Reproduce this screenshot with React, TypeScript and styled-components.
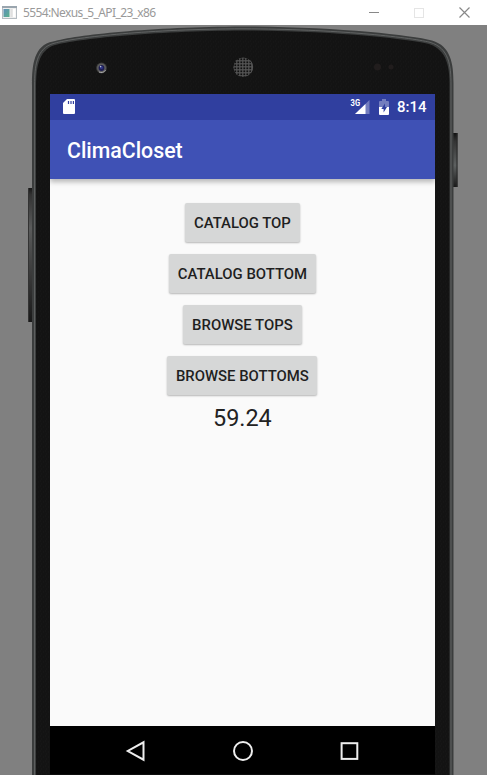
import React from "react";
import styled, { createGlobalStyle } from "styled-components";

const GlobalStyle = createGlobalStyle`
  * { box-sizing: border-box; }
  html, body { margin: 0; padding: 0; overflow: hidden; background: #808080; }
`;

const EmulatorWindow = styled.div`
  width: 487px;
  height: 775px;
  display: flex;
  flex-direction: column;
  overflow: hidden;
  background: #808080;
  font-family: Roboto, sans-serif;
`;

const TitleBar = styled.header`
  height: 25px;
  flex: none;
  display: flex;
  align-items: center;
  justify-content: space-between;
  background: #fff;
  padding: 0 17.5px 0 2px;
`;

const WindowTitle = styled.div`
  display: flex;
  align-items: center;
  gap: 6px;
  font-family: "Noto Sans", "Open Sans", sans-serif;
  font-size: 12px;
  letter-spacing: -0.62px;
  color: #999;
  white-space: nowrap;
`;

const WindowControls = styled.div`
  display: flex;
  gap: 35px;
  align-items: center;
`;

const Drawing = styled.svg`
  display: block;
  flex: none;
`;

const Stage = styled.main`
  position: relative;
  flex: 1;
  display: flex;
  padding: 69px 52px 0 50px;
`;

const PhoneBody = styled.svg`
  position: absolute;
  inset: 0;
`;

const Screen = styled.section`
  position: relative;
  flex: 1;
  display: flex;
  flex-direction: column;
  background: #fafafa;
`;

const StatusBar = styled.div`
  height: 26px;
  flex: none;
  display: flex;
  align-items: center;
  padding: 0 8.5px 0 13px;
  background: #303f9f;
  color: #fff;
`;

const CardIcon = styled(Drawing)`
  margin-bottom: 1px;
`;

const StatusIcons = styled.div`
  margin-left: auto;
  display: flex;
  align-items: center;
  gap: 9px;
`;

const Clock = styled.span`
  margin-left: -1.4px;
  font-size: 15px;
  font-weight: 500;
  line-height: 26px;
`;

const AppBar = styled.div`
  height: 59px;
  flex: none;
  display: flex;
  align-items: center;
  padding: 2px 17px 0;
  background: #3f51b5;
  color: #fff;
  font-size: 21.3px;
  font-weight: 500;
  box-shadow: 0 3px 5px rgba(0, 0, 0, 0.27);
  clip-path: inset(0 0 -12px 0);
`;

const Content = styled.div`
  flex: 1;
  display: flex;
  flex-direction: column;
  align-items: center;
  gap: 12.2px;
  padding: 23.6px 0.2px 0 0;
`;

const MaterialButton = styled.button<{ $width: number }>`
  width: ${(p) => p.$width}px;
  height: 39px;
  flex: none;
  padding: 1px 0 0;
  border: 0;
  border-radius: 2px;
  background: #d6d7d7;
  color: #1f1f1f;
  font: 500 14.9px Roboto, sans-serif;
  white-space: nowrap;
  box-shadow: 0 1px 2px rgba(0, 0, 0, 0.28);
`;

const Reading = styled.output`
  margin-top: -5.4px;
  font-size: 23.4px;
  line-height: 32px;
  color: #222;
`;

const NavBar = styled.nav`
  height: 49px;
  flex: none;
  display: flex;
  align-items: center;
  justify-content: center;
  gap: 83px;
  padding-top: 2px;
  background: #000;
  border-bottom: 1px solid #0e0e0e;
`;

const outline =
  "M32 751 V60 C32 40 34 20 53 16.5 C76 10 150 1.8 243 1.5 C336 1.8 410 10 432 15.5 C451 21 453.5 39 453.5 58 V751 Z";
const bezel =
  "M36 751 V62 C36 44 38 25 55 20 C78 14 150 6 243 5.5 C336 6 408 14 429 19 C447 25 449.5 42 449.5 60 V751 Z";

function Phone() {
  return (
    <PhoneBody width="487" height="750" viewBox="0 0 487 750" aria-hidden>
      <defs>
        <linearGradient id="volume" x1="0" x2="0" y1="0" y2="1">
          <stop offset="0" stopColor="#181818" />
          <stop offset="0.05" stopColor="#333" />
          <stop offset="0.3" stopColor="#5a5b5b" />
          <stop offset="0.7" stopColor="#353535" />
          <stop offset="1" stopColor="#191919" />
        </linearGradient>
        <linearGradient id="power" x1="0" x2="0" y1="0" y2="1">
          <stop offset="0" stopColor="#111" />
          <stop offset="0.15" stopColor="#333" />
          <stop offset="0.6" stopColor="#5d6060" />
          <stop offset="1" stopColor="#191919" />
        </linearGradient>
        <pattern id="grain" width="5" height="5" patternUnits="userSpaceOnUse">
          <rect width="5" height="5" fill="#131313" />
          <path d="M0 1h1M3 2h1M1 4h1" stroke="#181818" />
        </pattern>
        <pattern id="mesh" width="3" height="3" patternUnits="userSpaceOnUse">
          <rect width="3" height="3" fill="#555" />
          <rect x="0.4" y="0.4" width="1.8" height="1.8" fill="#111" />
        </pattern>
      </defs>
      <rect x="28" y="163" width="5" height="134" fill="url(#volume)" />
      <path d="M28.5 163v134" stroke="#333" />
      <rect x="453" y="108" width="4.5" height="54" fill="url(#power)" />
      <path d="M457 108v54" stroke="#292929" />
      <path d={outline} fill="#3b3d3d" />
      <path d={bezel} fill="url(#grain)" />
      <path
        d="M34.6 751 V60 C34.6 42 36 23 54 18.3 C77 12 150 4 243 3.8 C336 4 408 12 430 17.3 C449 23 451 40 451 60 V751"
        fill="none"
        stroke="#646666"
        strokeWidth="0.9"
      />
      <circle cx="101.5" cy="43" r="5.4" fill="#3c3c3c" />
      <circle cx="101.5" cy="43" r="4.5" fill="#5c5c5c" />
      <path d="M99 47a4.8 4.8 0 0 0 6.6-2" fill="none" stroke="#a5a5a5" />
      <circle cx="101.5" cy="43" r="2.9" fill="#1d1d52" />
      <circle cx="101.5" cy="42.7" r="1.4" fill="#30378c" />
      <circle cx="100.6" cy="41.6" r="0.8" fill="#b7bed6" />
      <circle cx="243.2" cy="42.3" r="9.8" fill="url(#mesh)" />
      <path d="M250.5 36a9.5 9.5 0 0 1 0 12" fill="none" stroke="#555" />
      <circle cx="377.5" cy="42" r="3.5" fill="#211d1d" />
      <circle cx="391" cy="42" r="2.5" fill="#211d1d" />
    </PhoneBody>
  );
}

const ACTIONS = [
  { label: "CATALOG TOP", width: 115 },
  { label: "CATALOG BOTTOM", width: 147 },
  { label: "BROWSE TOPS", width: 118.6 },
  { label: "BROWSE BOTTOMS", width: 150 },
];

export default function App() {
  return (
    <EmulatorWindow>
      <GlobalStyle />
      <TitleBar>
        <WindowTitle>
          <Drawing width="15" height="13" viewBox="0 0 15 13">
            <defs>
              <linearGradient id="app" x2="1" y2="1">
                <stop stopColor="#5f8fba" />
                <stop offset="1" stopColor="#58b28b" />
              </linearGradient>
            </defs>
            <rect x="0.5" y="0.5" width="14" height="12" fill="#eee" stroke="#b5bcc2" />
            <path d="M0 1h15" stroke="#9aa5ae" strokeWidth="2" />
            <rect x="1.5" y="3" width="6" height="8" fill="url(#app)" />
            <rect x="8.5" y="3" width="2" height="8" fill="#e0e0e0" />
            <rect x="11" y="3" width="2.5" height="8" fill="#fff" />
          </Drawing>
          5554:Nexus_5_API_23_x86
        </WindowTitle>
        <WindowControls>
          <Drawing width="10" height="10" viewBox="0 0 10 10">
            <path d="M0 4.5h10" stroke="#888" />
          </Drawing>
          <Drawing width="10" height="10" viewBox="0 0 10 10">
            <rect x="0.5" y="0.5" width="9" height="9" fill="none" stroke="#e5e5e5" />
          </Drawing>
          <Drawing width="11" height="11" viewBox="0 0 11 11">
            <path d="M.5 .5l10 10M10.5 .5l-10 10" stroke="#888" strokeWidth="1.2" />
          </Drawing>
        </WindowControls>
      </TitleBar>
      <Stage>
        <Phone />
        <Screen>
          <StatusBar>
            <CardIcon width="12" height="15" viewBox="0 0 12 15">
              <path
                d="M4 0h7a1 1 0 0 1 1 1v13a1 1 0 0 1-1 1H1a1 1 0 0 1-1-1V4z"
                fill="#fff"
              />
              <path d="M5.5 2v3M8 2v3M10.4 2v3" stroke="#303f9f" strokeWidth="1.2" />
            </CardIcon>
            <StatusIcons>
              <Drawing width="20" height="16" viewBox="0 0 20 16">
                <path d="M19.5 1v14H5z" fill="#737dbe" />
                <path d="M15.5 4.9v10.1H5z" fill="#fff" />
                <text
                  x="0.6"
                  y="7.4"
                  fill="#fff"
                  fontFamily="Roboto, sans-serif"
                  fontSize="8.5"
                  fontWeight="700"
                  textLength="9.5"
                  lengthAdjust="spacingAndGlyphs"
                >
                  3G
                </text>
              </Drawing>
              <Drawing width="10" height="16" viewBox="0 0 10 16">
                <path d="M3 0h4v2h2q1 0 1 1v5H0V3q0-1 1-1h2z" fill="#737dbe" />
                <path d="M0 8h10v7q0 1-1 1H1q-1 0-1-1z" fill="#fff" />
                <path d="M6 4.5L2.3 10H4.6V13.5L8 8H6z" fill="#303f9f" />
              </Drawing>
              <Clock>8:14</Clock>
            </StatusIcons>
          </StatusBar>
          <AppBar>ClimaCloset</AppBar>
          <Content>
            {ACTIONS.map((action) => (
              <MaterialButton key={action.label} $width={action.width}>
                {action.label}
              </MaterialButton>
            ))}
            <Reading>59.24</Reading>
          </Content>
          <NavBar>
            <Drawing width="24" height="24" viewBox="0 0 24 24">
              <path d="M19.5 3.3v17.4L3.8 12z" fill="none" stroke="#eee" strokeWidth="2" />
            </Drawing>
            <Drawing width="24" height="24" viewBox="0 0 24 24">
              <circle cx="12" cy="12" r="9" fill="none" stroke="#eee" strokeWidth="2" />
            </Drawing>
            <Drawing width="24" height="24" viewBox="0 0 24 24">
              <rect x="3.6" y="4.2" width="15.7" height="15.7" fill="none" stroke="#eee" strokeWidth="2" />
            </Drawing>
          </NavBar>
        </Screen>
      </Stage>
    </EmulatorWindow>
  );
}
